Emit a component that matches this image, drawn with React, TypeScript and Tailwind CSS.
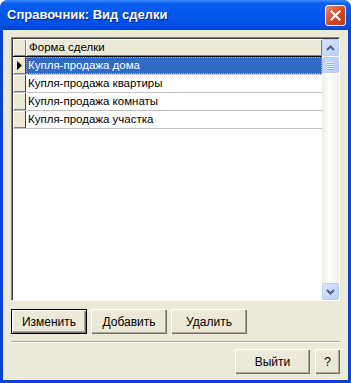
import React from 'react'

const rows = ['Купля-продажа дома', 'Купля-продажа квартиры', 'Купля-продажа комнаты', 'Купля-продажа участка']

function Btn({ label, w, isDefault }: { label: string; w: string; isDefault?: boolean }) {
  return (
    <div
      className={`${w} h-[25px] flex items-center justify-center text-[12px] text-black bg-[#ECE9D8] ${
        isDefault
          ? 'border border-black shadow-[inset_1px_1px_#fff,inset_-1px_-1px_#716F64,inset_-2px_-2px_#ACA899]'
          : 'shadow-[inset_1px_1px_#fff,inset_-1px_-1px_#716F64,inset_-2px_-2px_#ACA899]'
      }`}
    >
      {label}
    </div>
  )
}

function ScrollBtn({ up }: { up?: boolean }) {
  return (
    <div className="w-[17px] h-[17px] rounded-[2px] border border-[#B9CDF8] bg-[linear-gradient(135deg,#DCE6FE,#BACEFA)] flex items-center justify-center">
      <svg width="9" height="6" viewBox="0 0 9 6">
        <path d={up ? 'M1 5 L4.5 1.5 L8 5' : 'M1 1 L4.5 4.5 L8 1'} fill="none" stroke="#4D6185" strokeWidth="2" />
      </svg>
    </div>
  )
}

export default function App() {
  return (
    <div className="w-[351px] h-[383px] bg-[#0842D6] rounded-t-[8px] flex flex-col overflow-hidden font-['Liberation_Sans',Arial,sans-serif]">
      {/* title bar */}
      <div className="h-[30px] shrink-0 flex items-center justify-between pl-[7px] pr-[5px] bg-[linear-gradient(180deg,#3A8CFF_0%,#0A5FF0_12%,#0058EE_45%,#0050E4_80%,#0043CC_100%)]">
        <span className="text-white font-bold text-[13px] [text-shadow:1px_1px_#0A1E8C]">Справочник: Вид сделки</span>
        <div className="w-[21px] h-[21px] rounded-[3px] border border-white bg-[linear-gradient(135deg,#EE8A6E,#D9431E_55%,#C13A15)] flex items-center justify-center">
          <svg width="11" height="11" viewBox="0 0 11 11">
            <path d="M1.5 1.5 L9.5 9.5 M9.5 1.5 L1.5 9.5" stroke="#fff" strokeWidth="2.2" strokeLinecap="square" />
          </svg>
        </div>
      </div>

      {/* client */}
      <div className="flex-1 mx-[3px] mb-[3px] bg-[#ECE9D8] px-[8px] pt-[7px] flex flex-col">
        {/* datasheet */}
        <div className="h-[264px] flex border-t border-l border-[#808080] border-r border-b border-r-white border-b-white">
          <div className="flex-1 flex border-t border-l border-[#404040] border-r-0 bg-white">
            <div className="flex-1 flex flex-col">
              {/* header */}
              <div className="h-[18px] flex bg-[#ECE9D8] border-b border-black">
                <div className="w-[13px] shadow-[inset_1px_1px_#fff,inset_-1px_-1px_#808080]" />
                <div className="flex-1 pl-[3px] flex items-center text-[11.5px] text-black shadow-[inset_1px_1px_#fff,inset_-1px_-1px_#808080]">Форма сделки</div>
              </div>
              {rows.map((r, i) => (
                <div key={r} className="h-[18px] flex border-b border-[#C0C0C0]">
                  <div className="w-[13px] bg-[#ECE9D8] border-r border-[#404040] shadow-[inset_1px_1px_#fff,inset_0_-1px_#808080] flex items-center justify-center">
                    {i === 0 && (
                      <svg width="5" height="9" viewBox="0 0 5 9">
                        <path d="M0 0 L5 4.5 L0 9 Z" fill="#000" />
                      </svg>
                    )}
                  </div>
                  <div
                    className={`flex-1 pl-[2px] flex items-center text-[11.5px] ${
                      i === 0 ? 'bg-[#316AC5] text-white outline outline-1 outline-dotted outline-[#E8A860] -outline-offset-1' : 'text-black'
                    }`}
                  >
                    {r}
                  </div>
                </div>
              ))}
            </div>
            {/* scrollbar */}
            <div className="w-[17px] flex flex-col bg-[linear-gradient(90deg,#EEEDE5,#FEFEFB_40%,#F3F1EC)]">
              <ScrollBtn up />
              <div className="mt-[1px] h-[16px] rounded-[2px] border border-[#B9CDF8] bg-[linear-gradient(90deg,#C7D7FD,#BBCEFA)] flex flex-col items-center justify-center gap-[1px]">
                <div className="w-[7px] h-[1px] bg-[#EEF4FE] shadow-[0_1px_#8CB0F8]" />
                <div className="w-[7px] h-[1px] bg-[#EEF4FE] shadow-[0_1px_#8CB0F8]" />
                <div className="w-[7px] h-[1px] bg-[#EEF4FE] shadow-[0_1px_#8CB0F8]" />
                <div className="w-[7px] h-[1px] bg-[#EEF4FE] shadow-[0_1px_#8CB0F8]" />
              </div>
              <div className="flex-1" />
              <ScrollBtn />
            </div>
          </div>
        </div>

        {/* action buttons */}
        <div className="mt-[8px] flex gap-[4px]">
          <Btn label="Изменить" w="w-[76px]" isDefault />
          <Btn label="Добавить" w="w-[76px]" />
          <Btn label="Удалить" w="w-[76px]" />
        </div>

        {/* separator */}
        <div className="mt-[7px] h-[2px] border-t border-[#ACA899] border-b border-b-white" />

        {/* bottom buttons */}
        <div className="mt-[6px] flex justify-end gap-[5px]">
          <Btn label="Выйти" w="w-[75px]" />
          <Btn label="?" w="w-[25px]" />
        </div>
      </div>
    </div>
  )
}
